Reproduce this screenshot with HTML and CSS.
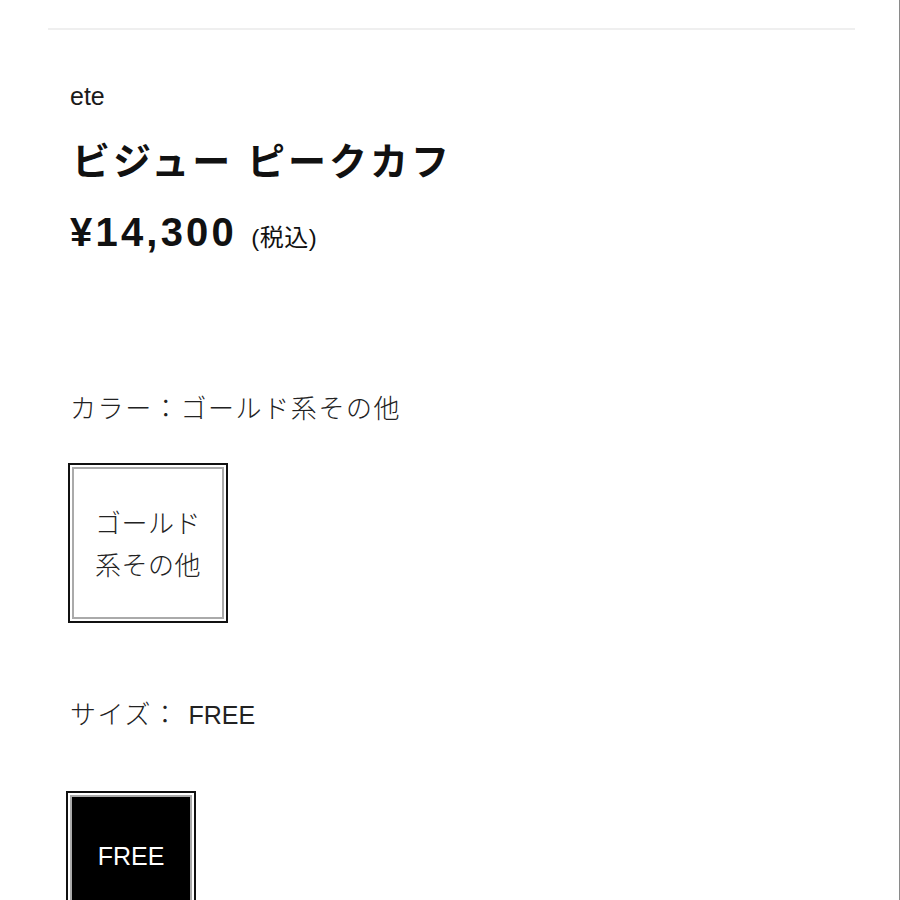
FILE: index.html
```html
<!DOCTYPE html>
<html lang="ja">
<head>
<meta charset="UTF-8">
<title>ビジュー ピークカフ | ete</title>
<link rel="stylesheet" href="styles.css">
</head>
<body>

<div class="rule"></div>

<div class="product">
	<p class="brand">ete</p>
	<h1 class="title">ビジュー ピークカフ</h1>
	<p class="price">¥14,300 <span class="tax">(税込)</span></p>

	<div class="option">
		<p class="option-label">カラー：ゴールド系その他</p>
		<div class="swatches">
			<div class="swatch selected">
				<div class="swatch-inner">ゴールド<br>系その他</div>
			</div>
		</div>
	</div>

	<div class="option size">
		<p class="option-label">サイズ： <span class="latin">FREE</span></p>
		<div class="swatches">
			<div class="swatch size-swatch">
				<div class="swatch-inner">FREE</div>
			</div>
		</div>
	</div>
</div>

</body>
</html>
```

FILE: styles.css
```css
* {
	box-sizing: border-box;
	margin: 0;
	padding: 0;
}
html {
	border-right: 1px solid #8a8a8a;
	height: 100%;
	overflow: hidden;
}
html, body {
	background: #fff;
	color: #111;
}
body {
	font-family: "Liberation Sans", "Noto Sans CJK JP", sans-serif;
}

.rule {
	margin: 28px 44px 0 48px;
	height: 2px;
	background: #efefef;
}

.product {
	padding: 0 0 0 70px;
}

.brand {
	margin-top: 51px;
	font-size: 25px;
	line-height: 30px;
	color: #1a1a1a;
}
.title {
	margin-top: 29px;
	margin-left: 2px;
	font-size: 38px;
	line-height: 44px;
	letter-spacing: 3px;
	font-weight: bold;
}
.price {
	margin-top: 26px;
	font-size: 40px;
	line-height: 44px;
	font-weight: bold;
	letter-spacing: 3.2px;
}
.price .tax {
	font-size: 24px;
	font-weight: normal;
	letter-spacing: 0.5px;
	margin-left: 0;
}

.option {
	margin-top: 133px;
}
.option-label {
	font-size: 26px;
	line-height: 32px;
	letter-spacing: 1.6px;
	color: #222;
	font-weight: 300;
}
.option-label .latin {
	font-size: 25px;
	letter-spacing: 0;
}
.swatches {
	margin-top: 38px;
	display: flex;
	margin-left: -2px;
}
.swatch {
	width: 160px;
	height: 160px;
	border: 2px solid #111;
	padding: 2px;
	background: #fff;
}
.swatch-inner {
	height: 100%;
	border: 2px solid #aaa;
	display: flex;
	align-items: center;
	justify-content: center;
	text-align: center;
	font-size: 26px;
	line-height: 42px;
	letter-spacing: 0.5px;
	color: #222;
	font-weight: 300;
	padding-top: 4px;
}

.option.size {
	margin-top: 76px;
}
.option.size .swatches {
	margin-top: 60px;
	margin-left: -4px;
}
.size-swatch {
	width: 130px;
	height: 130px;
}
.size-swatch .swatch-inner {
	background: #000;
	color: #fff;
	font-size: 25px;
	font-family: "Liberation Sans", sans-serif;
	padding-top: 0;
	letter-spacing: 0;
}
```
